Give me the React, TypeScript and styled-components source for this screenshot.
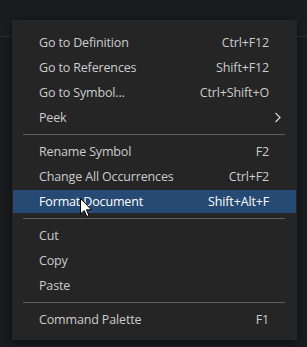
import React from "react";
import styled, { createGlobalStyle } from "styled-components";

const Global = createGlobalStyle`
  html, body { margin: 0; padding: 0; background: #1a1b1f; }
  #root { width: 307px; height: 347px; }
`;

const Page = styled.div`
  position: relative;
  width: 307px;
  height: 347px;
  overflow: hidden;
  background: #1a1b1f;
  display: flex;
  flex-direction: column;
  font-family: "Open Sans", "Noto Sans", sans-serif;
`;

const TopBar = styled.div`
  height: 21px;
  background: #1b1c20;
`;

const TabStrip = styled.div`
  height: 15px;
  background: #1c1d21;
  border-bottom: 1px solid #2c2d31;
`;

const Editor = styled.div`
  flex: 1;
  background: #1a1b1f;
`;

const Menu = styled.div`
  position: absolute;
  left: 12px;
  top: 20px;
  width: 285px;
  padding: 10px 0 8px;
  background: #252526;
  box-shadow: 0 2px 8px rgba(0, 0, 0, 0.55);
  display: flex;
  flex-direction: column;
  box-sizing: border-box;
`;

const Item = styled.div<{ $active?: boolean }>`
  position: relative;
  height: 23px;
  margin: 1px 1px;
  padding: 0 27px 0 26px;
  display: flex;
  align-items: center;
  justify-content: space-between;
  font-size: 12.5px;
  letter-spacing: -0.15px;
  color: ${(p) => (p.$active ? "#ffffff" : "#cccccc")};
  background: ${(p) => (p.$active ? "#264a73" : "transparent")};
  white-space: nowrap;
`;

const Label = styled.span``;
const Keys = styled.span``;

const Chevron = styled.svg`
  position: absolute;
  right: 14px;
  top: 6px;
`;

const Separator = styled.div`
  margin: 4px 12px 4px 11px;
  height: 1px;
  background: #5e5e5e;
`;

const Cursor = styled.svg`
  position: absolute;
  left: 80px;
  top: 198px;
`;

type Entry = { label: string; keys?: string; sub?: boolean; active?: boolean } | "sep";

const entries: Entry[] = [
  { label: "Go to Definition", keys: "Ctrl+F12" },
  { label: "Go to References", keys: "Shift+F12" },
  { label: "Go to Symbol...", keys: "Ctrl+Shift+O" },
  { label: "Peek", sub: true },
  "sep",
  { label: "Rename Symbol", keys: "F2" },
  { label: "Change All Occurrences", keys: "Ctrl+F2" },
  { label: "Format Document", keys: "Shift+Alt+F", active: true },
  "sep",
  { label: "Cut" },
  { label: "Copy" },
  { label: "Paste" },
  "sep",
  { label: "Command Palette", keys: "F1" },
];

export default function App() {
  return (
    <>
      <Global />
      <Page>
        <TopBar />
        <TabStrip />
        <Editor />
        <Menu>
          {entries.map((e, i) =>
            e === "sep" ? (
              <Separator key={i} />
            ) : (
              <Item key={i} $active={e.active}>
                <Label>{e.label}</Label>
                {e.keys && <Keys>{e.keys}</Keys>}
                {e.sub && (
                  <Chevron width="8" height="11" viewBox="0 0 8 11">
                    <path d="M1.5 1 L6 5.5 L1.5 10" fill="none" stroke="#cccccc" strokeWidth="1.3" />
                  </Chevron>
                )}
              </Item>
            )
          )}
        </Menu>
        <Cursor width="13" height="20" viewBox="0 0 13 20">
          <path
            d="M0.5 0.5 L0.5 16 L4.2 12.6 L6.8 18.5 L9 17.6 L6.5 11.8 L11.5 11.8 Z"
            fill="#ffffff"
            stroke="#000000"
            strokeWidth="1"
            strokeLinejoin="round"
          />
        </Cursor>
      </Page>
    </>
  );
}
